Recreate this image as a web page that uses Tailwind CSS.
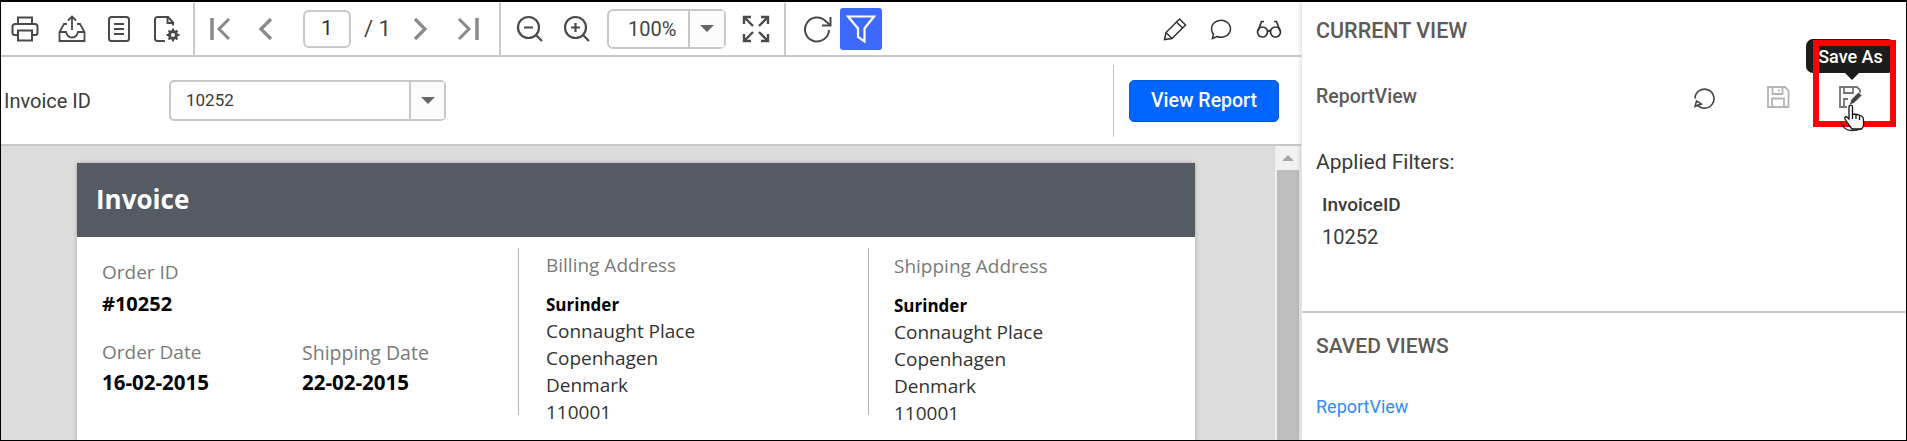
<!DOCTYPE html>
<html lang="en">
<head>
    <meta charset="UTF-8">
    <title>Report Viewer</title>
    <script src="https://cdn.jsdelivr.net/npm/@tailwindcss/browser@4"></script>
</head>
<body class="bg-white">
    <div class="relative flex h-[441px] w-[1907px] overflow-hidden border border-t-2 border-black font-['Roboto',sans-serif]">
        <!-- report viewer -->
        <div class="flex w-[1300px] shrink-0 flex-col">
            <!-- toolbar -->
            <div class="flex h-[55px] shrink-0 items-center border-b-2 border-[#c8c8c8] text-[#555]">
                <div class="flex w-[47px] justify-center">
                    <svg width="28" height="28" viewBox="0 0 28 28" fill="none" stroke="#4a4a4a" stroke-width="2"><path d="M7 9V2.500h14V9"/><path d="M7 20H3.500a2 2 0 0 1-2-2v-6.500a2.500 2.500 0 0 1 2.500-2.500h20a2.500 2.500 0 0 1 2.500 2.500V18a2 2 0 0 1-2 2H21"/><path d="M7 15.500h14v10H7z"/></svg>
                </div>
                <div class="flex w-[47px] justify-center">
                    <svg width="28" height="28" viewBox="0 0 28 28" fill="none" stroke="#4a4a4a" stroke-width="1.800"><path d="M14 15V1.500M10 5.500l4-4 4 4"/><path d="M9 9H6L1.500 17v9h25v-9L22 9h-3"/><path d="M1.500 17H8c1 4 3 5.500 6 5.500s5-1.500 6-5.500h6.500"/></svg>
                </div>
                <div class="flex w-[47px] justify-center">
                    <svg width="24" height="28" viewBox="0 0 24 28" fill="none" stroke="#4a4a4a" stroke-width="2"><rect x="2" y="2" width="20" height="24" rx="2.500"/><path d="M7 9h10M7 14h10M7 19h10"/></svg>
                </div>
                <div class="flex w-[50px] justify-center">
                    <svg width="30" height="28" viewBox="0 0 30 28" fill="none" stroke="#4a4a4a" stroke-width="2"><path d="M13 26H5a2.500 2.500 0 0 1-2-2.500V4a2.500 2.500 0 0 1 2-2h11l5 5.500v3"/><path d="M15.500 2v6h5.500"/><circle cx="21" cy="20" r="3.500" stroke-width="3"/><path d="M21 13.500v3M21 23.500v3M14.500 20h3M24.500 20h3M16.500 15.500l2 2M23.500 22.500l2 2M16.500 24.500l2-2M23.500 17.500l2-2" stroke-width="2"/></svg>
                </div>
                <div class="ml-[1px] h-[52px] w-[2px] bg-[#c8c8c8]"></div>
                <div class="ml-[14px] flex w-[24px] justify-center">
                    <svg width="24" height="26" viewBox="0 0 24 26" fill="none" stroke="#8a8a8a" stroke-width="3"><path d="M3 2v22" stroke-width="3.500"/><path d="M20 3L10 13l10 10"/></svg>
                </div>
                <div class="ml-[22px] flex w-[20px] justify-center">
                    <svg width="16" height="26" viewBox="0 0 16 26" fill="none" stroke="#8a8a8a" stroke-width="3.200"><path d="M14 3L4 13l10 10"/></svg>
                </div>
                <div class="ml-[28px] flex h-[38px] w-[48px] items-center justify-center rounded-[6px] border-2 border-[#c8c8c8] text-[21px] text-[#333]">1</div>
                <div class="ml-[13px] w-[40px] text-[22px] text-[#444]">/ 1</div>
                <div class="ml-[7px] flex w-[20px] justify-center">
                    <svg width="16" height="26" viewBox="0 0 16 26" fill="none" stroke="#8a8a8a" stroke-width="3.200"><path d="M2 3l10 10L2 23"/></svg>
                </div>
                <div class="ml-[25px] flex w-[24px] justify-center">
                    <svg width="24" height="26" viewBox="0 0 24 26" fill="none" stroke="#8a8a8a" stroke-width="3"><path d="M3 3l10 10L3 23"/><path d="M21 2v22" stroke-width="3.500"/></svg>
                </div>
                <div class="ml-[19px] h-[52px] w-[2px] bg-[#c8c8c8]"></div>
                <div class="ml-[15px] flex w-[28px] justify-center">
                    <svg width="28" height="28" viewBox="0 0 28 28" fill="none" stroke="#4a4a4a" stroke-width="2.200"><circle cx="12.500" cy="12.500" r="10.500"/><path d="M20 20l6 6M8 12.500h9"/></svg>
                </div>
                <div class="ml-[19px] flex w-[28px] justify-center">
                    <svg width="28" height="28" viewBox="0 0 28 28" fill="none" stroke="#4a4a4a" stroke-width="2.200"><circle cx="12.500" cy="12.500" r="10.500"/><path d="M20 20l6 6M8 12.500h9M12.500 8v9"/></svg>
                </div>
                <div class="ml-[16px] flex h-[40px] w-[119px] items-center rounded-[6px] border-2 border-[#c8c8c8] text-[#444]">
                    <div class="flex-1 pl-[19px] text-[20px]">100%</div>
                    <div class="flex h-full w-[36px] items-center justify-center border-l-2 border-[#c8c8c8] bg-[#fcfcfc]">
                        <div class="h-0 w-0 border-x-[7px] border-t-[7px] border-x-transparent border-t-[#666]"></div>
                    </div>
                </div>
                <div class="ml-[16px] flex w-[28px] justify-center">
                    <svg width="28" height="28" viewBox="0 0 28 28" fill="none" stroke="#4a4a4a" stroke-width="2.400"><path d="M2 9V2h7M19 2h7v7M26 19v7h-7M9 26H2v-7M2.500 2.500L11 11M25.500 2.500L17 11M25.500 25.500L17 17M2.500 25.500L11 17"/></svg>
                </div>
                <div class="ml-[14px] h-[52px] w-[2px] bg-[#c8c8c8]"></div>
                <div class="ml-[17px] flex w-[30px] justify-center">
                    <svg width="30" height="28" viewBox="0 0 30 28" fill="none" stroke="#4a4a4a" stroke-width="2"><path d="M26 15a12 12 0 1 1-3.500-9L27 10"/><path d="M27.500 2v8.500H19"/></svg>
                </div>
                <div class="ml-[7px] flex h-[42px] w-[42px] items-center justify-center rounded-[3px] bg-[#3d69ff]">
                    <svg width="32" height="32" viewBox="0 0 32 32" fill="none" stroke="#fff" stroke-width="2.200"><path d="M3 3.500h26L19.500 15.500v13L13 24V15.500z"/></svg>
                </div>
                <div class="ml-[280px] flex w-[26px] justify-center">
                    <svg width="24" height="24" viewBox="0 0 24 24" fill="none" stroke="#333" stroke-width="1.500"><path d="M1.500 22.500l1.500-7L16.500 2l6 6L9 21.500z"/><path d="M13.500 5l6 6M3 15.500l6 6"/></svg>
                </div>
                <div class="ml-[20px] flex w-[26px] justify-center">
                    <svg width="24" height="22" viewBox="0 0 24 22" fill="none" stroke="#333" stroke-width="1.500"><path d="M3.500 20.500l1-4.500A9.500 8.500 0 1 1 8 18.500z"/></svg>
                </div>
                <div class="ml-[22px] flex w-[26px] justify-center">
                    <svg width="26" height="20" viewBox="0 0 26 20" fill="none" stroke="#333" stroke-width="1.700"><circle cx="6.500" cy="13" r="5"/><circle cx="19.500" cy="13" r="5"/><path d="M11.500 12.500c1-1 2-1 3 0M2 12L5.500 2.500H8M24 12L20.500 2.500H18"/></svg>
                </div>
            </div>

            <!-- parameters -->
            <div class="flex h-[89px] shrink-0 items-center border-b-2 border-[#c8c8c8]">
                <div class="ml-[3px] w-[165px] text-[20px] text-[#3b3b3b]">Invoice ID</div>
                <div class="flex h-[41px] w-[277px] items-center rounded-[5px] border-2 border-[#c8c8c8] text-[#3b3b3b]">
                    <div class="flex-1 pl-[15px] text-[17px]">10252</div>
                    <div class="flex h-full w-[35px] items-center justify-center border-l-2 border-[#c8c8c8] bg-[#fcfcfc]">
                        <div class="h-0 w-0 border-x-[7px] border-t-[7px] border-x-transparent border-t-[#666]"></div>
                    </div>
                </div>
                <div class="ml-[667px] h-[72px] w-[1px] bg-[#c4c4c4]"></div>
                <button class="ml-[15px] h-[42px] w-[150px] rounded-[5px] border border-[#0a5ad8] bg-[#0066ff] text-[19.500px] font-medium text-white">View Report</button>
            </div>

            <!-- report area -->
            <div class="flex min-h-0 flex-1 bg-[#dcdcdc]">
                <div class="min-w-0 flex-1 overflow-hidden pl-[76px] pt-[17px]">
                    <div class="h-[320px] w-[1118px] bg-white font-['Open_Sans',sans-serif] shadow-[0_0_4px_rgba(0,0,0,0.25)]">
                        <div class="flex h-[74px] items-center bg-[#555b62] pb-[2px] pl-[19px] text-[26px] font-bold text-white">Invoice</div>
                        <div class="flex pt-[11px]">
                            <div class="h-[167px] w-[442px] border-r border-[#b5b5b5] pl-[25px] pt-[11px]">
                                <div class="text-[19px] leading-[27px] text-[#7a7a7a]">Order ID</div>
                                <div class="mt-[4px] text-[20px] leading-[27px] font-bold text-black">#10252</div>
                                <div class="mt-[22px] flex">
                                    <div class="w-[200px]">
                                        <div class="text-[19px] leading-[27px] text-[#7a7a7a]">Order Date</div>
                                        <div class="mt-[3px] text-[20.500px] leading-[27px] font-bold text-black">16-02-2015</div>
                                    </div>
                                    <div>
                                        <div class="text-[19.500px] leading-[27px] text-[#7a7a7a]">Shipping Date</div>
                                        <div class="mt-[3px] text-[20.500px] leading-[27px] font-bold text-black">22-02-2015</div>
                                    </div>
                                </div>
                            </div>
                            <div class="h-[167px] w-[350px] border-r border-[#b5b5b5] pl-[27px] pt-[4px] text-[19px] leading-[27px] text-[#333]">
                                <div class="mb-[12px] text-[#7a7a7a]">Billing Address</div>
                                <div class="text-[17px] font-bold text-black">Surinder</div>
                                <div>Connaught Place</div>
                                <div>Copenhagen</div>
                                <div>Denmark</div>
                                <div>110001</div>
                            </div>
                            <div class="pl-[25px] pt-[5px] text-[19px] leading-[27px] text-[#333]">
                                <div class="mb-[12px] text-[#7a7a7a]">Shipping Address</div>
                                <div class="text-[17px] font-bold text-black">Surinder</div>
                                <div>Connaught Place</div>
                                <div>Copenhagen</div>
                                <div>Denmark</div>
                                <div>110001</div>
                            </div>
                        </div>
                    </div>
                </div>
                <!-- scrollbar -->
                <div class="flex w-[26px] shrink-0 flex-col items-center border-x-2 border-x-[#ededed] bg-[#f1f1f1]">
                    <div class="mt-[9px] h-0 w-0 border-x-[6px] border-b-[6px] border-x-transparent border-b-[#a8a8a8]"></div>
                    <div class="mt-[9px] w-full flex-1 bg-[#bdbdbd]"></div>
                </div>
            </div>
        </div>

        <!-- views panel -->
        <div class="flex min-w-0 flex-1 flex-col border-l border-[#e6e6e6] shadow-[-2px_0_3px_rgba(0,0,0,0.08)]">
            <div class="h-[311px] shrink-0 border-b-2 border-[#c8c8c8] pl-[14px] pr-[15px]">
                <div class="pt-[17px] text-[21.500px] leading-[24px] font-medium text-[#5f5a5a]">CURRENT VIEW</div>
                <div class="mt-[36px] flex h-[36px] items-center">
                    <div class="w-[375px] text-[19.500px] font-medium text-[#5f5a5a]">ReportView</div>
                    <div class="flex w-[26px] justify-center">
                        <svg width="24" height="24" viewBox="0 0 24 24" fill="none" stroke="#444" stroke-width="1.600"><path d="M5 19.500a9.500 9.500 0 1 0-2-6"/><path d="M3 21.500l1.500-5.500 5 3z" stroke-width="1.500"/></svg>
                    </div>
                    <div class="ml-[49px] flex w-[24px] justify-center">
                        <svg width="24" height="24" viewBox="0 0 24 24" fill="none" stroke="#b4b4b4" stroke-width="1.800"><path d="M2 2h17l3.500 3.500V22H2z"/><path d="M6.500 2v7h10V2M13 4.500v2M6 22v-8.500h12V22"/></svg>
                    </div>
                    <div class="ml-[48px] flex w-[24px] justify-center">
                        <svg width="24" height="24" viewBox="0 0 24 24" fill="none" stroke="#777" stroke-width="1.800"><path d="M9 22H2V2h17l3 3v3"/><path d="M6 2v6h9V2M6 22v-8h4"/><path d="M11 20.500l2-6 7.500-7.500 3.500 3.500-7.500 7.500z" fill="#444" stroke="#fff" stroke-width="1"/></svg>
                    </div>
                </div>
                <div class="mt-[35px] text-[21px] leading-[24px] text-[#3b3b3b]">Applied Filters:</div>
                <div class="mt-[19px] pl-[6px] text-[19px] leading-[24px] font-medium text-[#3b3b3b]">InvoiceID</div>
                <div class="mt-[8px] pl-[6px] text-[20px] leading-[24px] text-[#3b3b3b]">10252</div>
            </div>
            <div class="pl-[14px] pr-[15px]">
                <div class="pt-[21px] text-[21px] leading-[24px] font-medium text-[#5f5a5a]">SAVED VIEWS</div>
                <div class="mt-[37px] text-[18px] leading-[24px] text-[#2a8cff]">ReportView</div>
            </div>
        </div>

        <!-- tooltip and callout over the panel -->
        <div class="absolute left-[1805px] top-[37px] flex h-[34px] w-[89px] items-center justify-center rounded-[7px] bg-[#1c1c1c] text-[18px] font-medium text-white">Save As</div>
        <div class="absolute left-[1844px] top-[71px] h-0 w-0 border-x-[7px] border-t-[7px] border-x-transparent border-t-[#1c1c1c]"></div>
        <div class="absolute left-[1812px] top-[38px] h-[87px] w-[83px] border-[6px] border-[#ff0000]"></div>
        <svg class="absolute left-[1838px] top-[101px]" width="28" height="30" viewBox="0 0 28 30" fill="none" stroke="#111" stroke-width="1.300"><path d="M2 19.500c1 4 5 8 10 8 6 0 11-1 12-4" stroke="#333"/><path d="M10 22L6 16c-1-2 1-3 2.500-1.500L10 16V4c0-2.500 3.500-2.500 3.500 0v7c3 0 7 1 9 2s2 2 2 4v5c0 2-1 3-2 4H13z" fill="#fff"/><path d="M13.500 11v5M17 12v4M20.500 13v4"/></svg>
    </div>
</body>
</html>
